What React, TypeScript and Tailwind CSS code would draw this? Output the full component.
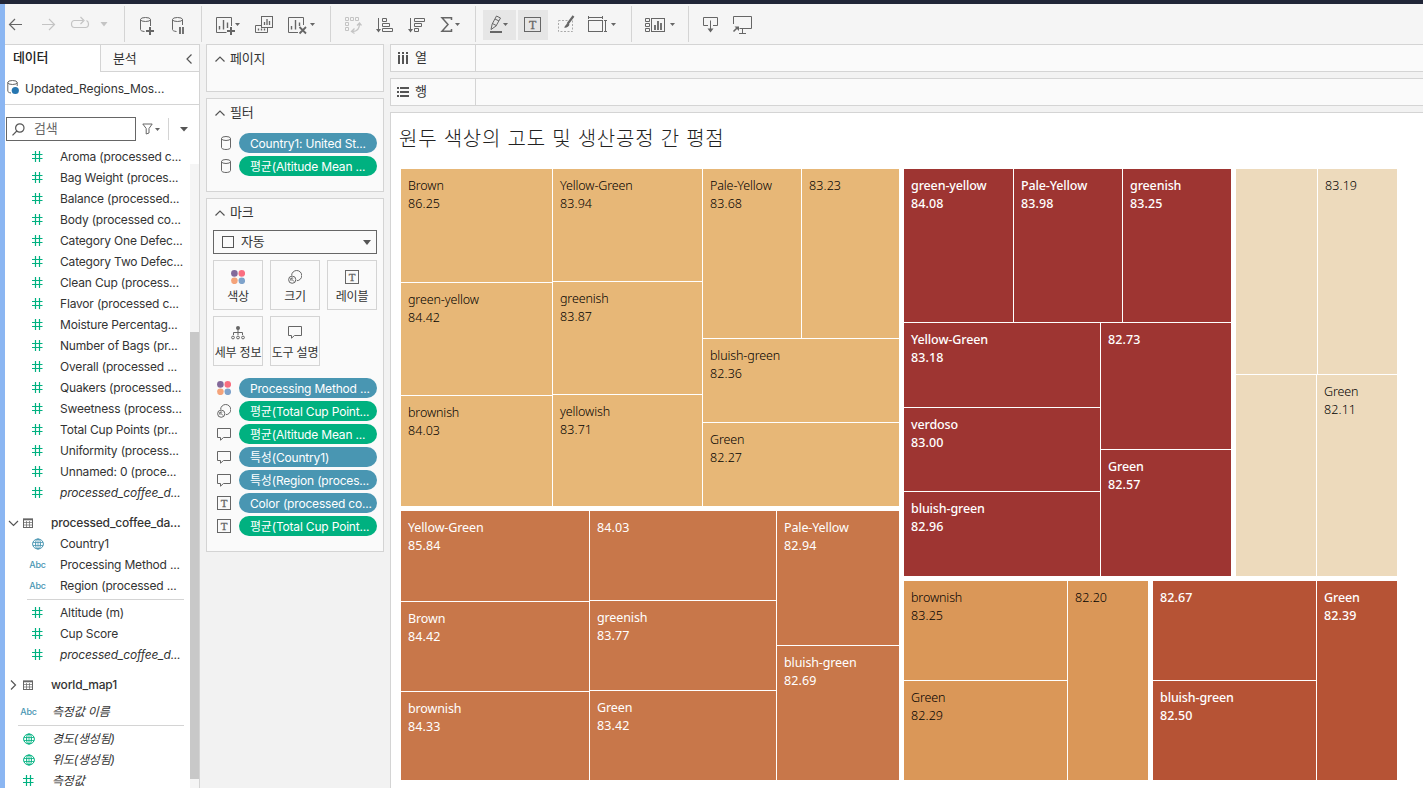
import type { ReactNode } from 'react';
import clsx from 'clsx';

const fields = [
  'Aroma (processed c...',
  'Bag Weight (proces...',
  'Balance (processed...',
  'Body (processed co...',
  'Category One Defec...',
  'Category Two Defec...',
  'Clean Cup (process...',
  'Flavor (processed c...',
  'Moisture Percentag...',
  'Number of Bags (pr...',
  'Overall (processed ...',
  'Quakers (processed...',
  'Sweetness (process...',
  'Total Cup Points (pr...',
  'Uniformity (process...',
  'Unnamed: 0 (proce...',
];

const markPills = [
  { icon: 'color', label: 'Processing Method ...', green: false },
  { icon: 'size', label: '평균(Total Cup Point...', green: true },
  { icon: 'tooltip', label: '평균(Altitude Mean ...', green: true },
  { icon: 'tooltip', label: '특성(Country1)', green: false },
  { icon: 'tooltip', label: '특성(Region (proces...', green: false },
  { icon: 'label', label: 'Color (processed co...', green: false },
  { icon: 'label', label: '평균(Total Cup Point...', green: true },
];

/* ---------- icons ---------- */

const ToolIcon = ({ className, children }: { className: string; children: ReactNode }) => (
  <svg className={clsx('h-[22px] shrink-0 text-[#666]', className)} fill="none" stroke="currentColor">
    {children}
  </svg>
);

const Sep = ({ className }: { className: string }) => (
  <div className={clsx('w-px h-9 shrink-0 bg-[#d4d4d4]', className)} />
);

const Caret = ({ x }: { x: number }) => (
  <path d={`M${x} 10h5l-2.5 3z`} fill="currentColor" stroke="none" />
);

const Hash = () => (
  <svg className="w-[11px] h-[11px]" stroke="#00b180" strokeWidth="1.2" fill="none">
    <path d="M0 3.5H10.5M0 7.5H10.5M3.5 0V11M7.5 0V11" />
  </svg>
);

const Globe = ({ color }: { color: string }) => (
  <svg className="w-[12px] h-[12px]" stroke={color} fill="none">
    <ellipse cx="6" cy="6" rx="5.4" ry="5" />
    <ellipse cx="6" cy="6" rx="2.4" ry="5" />
    <path d="M1 4.5H11M1 7.5H11M6 1V11" strokeWidth=".8" />
  </svg>
);

const Abc = () => <span className="font-[Inter] text-[9px] font-medium text-[#4996b2]">Abc</span>;

const TableIcon = () => (
  <svg className="w-[10px] h-[10px]" stroke="#666" fill="none">
    <rect x=".5" y="1" width="9" height="8.5" />
    <path d="M0 1.5H10" strokeWidth="1.6" />
    <path d="M1 4.5H9M1 7H9M3.5 3V9M6.5 3V9" strokeWidth=".7" />
  </svg>
);

const ChevronUp = () => (
  <svg className="w-[10px] h-[6px]" stroke="#555" strokeWidth="1.2" fill="none">
    <path d="M.5 5.5L5 1l4.5 4.5" />
  </svg>
);

const Cylinder = () => (
  <svg className="w-[10px] h-[14px] ml-1" stroke="#666" fill="none">
    <ellipse cx="5" cy="2.5" rx="4.5" ry="2" />
    <path d="M.5 2.5V11.5C.5 12.7 2.5 13.5 5 13.5s4.5-.8 4.5-2V2.5" />
  </svg>
);

const ColorDots = () => (
  <svg className="w-[14px] h-[14px]">
    <circle cx="3.4" cy="3.4" r="3.3" fill="#83699a" />
    <circle cx="10.8" cy="3.4" r="3.3" fill="#fa6e80" />
    <circle cx="3.4" cy="10.8" r="3.3" fill="#f4a37a" />
    <circle cx="10.8" cy="10.8" r="3.3" fill="#7fa3cb" />
  </svg>
);

const SizeIcon = () => (
  <svg className="w-[14px] h-[14px]" stroke="#666" fill="none">
    <path d="M3.6 5.5A5.1 5.1 0 1 1 8.8 10.7" />
    <circle cx="4.2" cy="9.7" r="3.6" />
    <path d="M2.5 8L6 11.5M3.2 10.8a1.6 1.6 0 0 1 2-2.5" />
  </svg>
);

const TooltipIcon = () => (
  <svg className="w-[14px] h-[13px]" stroke="#666" fill="none">
    <path d="M.5.5h13v9H6.5L3.5 12.2V9.5h-3z" />
  </svg>
);

const LabelIcon = () => (
  <svg className="w-[14px] h-[14px]" stroke="#666" fill="none">
    <rect x=".5" y=".5" width="13" height="13" />
    <text x="7" y="10.8" textAnchor="middle" fontSize="11" fontFamily="Liberation Serif, serif" fill="#666" strokeWidth=".3">
      T
    </text>
  </svg>
);

const DetailIcon = () => (
  <svg className="w-[14px] h-[14px]" stroke="#666" fill="none">
    <circle cx="7" cy="2" r="2" fill="#666" stroke="none" />
    <path d="M7 3V9M2.5 9V6.5H11.5V9" />
    <circle cx="2" cy="11.5" r="1.4" />
    <circle cx="7" cy="11.5" r="1.4" />
    <circle cx="12" cy="11.5" r="1.4" />
  </svg>
);

const MarkIcon = ({ name }: { name: string }) => {
  if (name === 'color') return <ColorDots />;
  if (name === 'size') return <SizeIcon />;
  if (name === 'tooltip') return <TooltipIcon />;
  if (name === 'detail') return <DetailIcon />;
  return <LabelIcon />;
};

/* ---------- toolbar ---------- */

const Toolbar = () => (
  <div className="flex items-center h-10 shrink-0 bg-[#f5f5f5]">
    <ToolIcon className="w-4 ml-[3px]">
      <path d="M1.5 11.5H14M7 6L1.5 11.5L7 17" strokeWidth="1.2" />
    </ToolIcon>
    <ToolIcon className="w-4 ml-[17px] text-[#c4c4c4]!">
      <path d="M1 11.5H13.5M8 6L13.5 11.5L8 17" strokeWidth="1.2" />
    </ToolIcon>
    <ToolIcon className="w-5 ml-[13px] text-[#c4c4c4]!">
      <path d="M13 7.5H4.5c-2 0-3 1.5-3 3.5s1 3.5 3 3.5h11c2 0 3-1.5 3-3.5s-1-3-2-3.5M10.5 4L14 7.5L10.5 11" strokeWidth="1.2" />
    </ToolIcon>
    <ToolIcon className="w-2 ml-[10px] text-[#c4c4c4]!">
      <path d="M.5 9h7L4 13.5z" fill="currentColor" stroke="none" />
    </ToolIcon>
    <Sep className="ml-[16px]" />

    <ToolIcon className="w-[18px] ml-[13px]">
      <ellipse cx="7.5" cy="6.5" rx="5" ry="2" />
      <path d="M2.5 6.5V16.5c0 1 1.5 1.8 4 2M12.5 6.5V13" />
      <path d="M12 14v8M8 18h8" strokeWidth="2" />
    </ToolIcon>
    <ToolIcon className="w-4 ml-[14px]">
      <ellipse cx="7.5" cy="6.5" rx="5" ry="2" />
      <path d="M2.5 6.5V16.5c0 1 1.5 1.8 4 2M12.5 6.5V12" />
      <path d="M10 14v7M13 14v7" strokeWidth="1.8" />
    </ToolIcon>
    <Sep className="ml-[15px]" />

    <ToolIcon className="w-[26px] ml-[13px]">
      <path d="M11.5 19.5H1.5v-15h15V13" />
      <path d="M4.5 13v3.5M8.5 7v9.500M12.5 9.5V15" strokeWidth="1.4" />
      <path d="M16 14v8M12 18h8" strokeWidth="2" />
      <Caret x={20} />
    </ToolIcon>
    <ToolIcon className="w-5 ml-[13px]">
      <rect x="7.5" y="3.5" width="11" height="11" />
      <path d="M7.5 12.5H1.5v7h12v-5" />
      <path d="M10.5 9v3M13 6v6M15.5 8v4M4.5 15.5v2M7.5 15.5v2M10.5 15.5v2" strokeWidth="1.3" />
    </ToolIcon>
    <ToolIcon className="w-7 ml-[13px]">
      <path d="M11 19.5H1.5v-15h15V12" />
      <path d="M4.5 13v3.5M8.5 7v9.5M12.5 9.5V13" strokeWidth="1.4" />
      <path d="M12.5 14l6.5 6.5M19 14l-6.5 6.5" strokeWidth="1.8" />
      <Caret x={23} />
    </ToolIcon>
    <Sep className="ml-[15px]" />

    <ToolIcon className="w-[18px] ml-[13px] text-[#c4c4c4]!">
      <path d="M1.5 4.5h3v3h-3zM6.5 4.5h3v3h-3zM11.5 4.5h3v3h-3zM1.5 9.5h3v3h-3zM1.5 14.5h3v3h-3z" />
      <path d="M8.5 18.5c4.5 0 7-3 7-8M10.5 15.5l-3 3 3 2M13 12.5l2.5-2.5 2 2.5" strokeWidth="1.3" />
    </ToolIcon>
    <ToolIcon className="w-5 ml-[13px]">
      <path d="M3.5 5v13" />
      <path d="M1 16h5l-2.5 3.5z" fill="currentColor" stroke="none" />
      <path d="M7.5 5.5h4v3h-4zM7.5 10.5h7v3h-7zM7.5 15.5h10v3h-10z" />
    </ToolIcon>
    <ToolIcon className="w-5 ml-[12px]">
      <path d="M3.5 5v13" />
      <path d="M1 16h5l-2.5 3.5z" fill="currentColor" stroke="none" />
      <path d="M7.5 5.5h10v3h-10zM7.5 10.5h7v3h-7zM7.5 15.5h4v3h-4z" />
    </ToolIcon>
    <ToolIcon className="w-[22px] ml-[13px]">
      <path d="M11.5 7V4.8H2l6 6.7-6 6.7h9.5V16" strokeWidth="1.5" />
      <Caret x={15} />
    </ToolIcon>
    <Sep className="ml-[13px]" />

    <div className="flex items-center w-[33px] h-[30px] ml-[7px] mt-[2px] pb-[2px] bg-[#e6e6e6]">
      <ToolIcon className="w-[33px]">
        <path d="M8 16.5l1.2-5.5 4.3-8 4 2-4.5 8zM9.5 10.5l4 2.2M12 6l4 2" />
        <path d="M7 19h12" strokeWidth="2" />
        <Caret x={20} />
      </ToolIcon>
    </div>
    <div className="flex items-center w-[30px] h-[30px] ml-[2px] mt-[2px] pb-[2px] bg-[#e6e6e6]">
      <ToolIcon className="w-[30px]">
        <rect x="6.5" y="4.5" width="16" height="14" />
        <text x="14.5" y="15.5" textAnchor="middle" fontSize="12" fontFamily="Liberation Serif, serif" fill="currentColor" strokeWidth=".3">
          T
        </text>
      </ToolIcon>
    </div>
    <ToolIcon className="w-[18px] ml-[9px]">
      <path d="M1.5 7.5h14v11h-14z" stroke="#aaa" strokeDasharray="2 1.5" />
      <path d="M16.5 3L10.5 11" strokeWidth="2.2" />
      <path d="M11 10.5c-2 0-2.5 2.5-4 4 2 .5 5-.5 5.500-3z" fill="currentColor" stroke="none" />
    </ToolIcon>
    <ToolIcon className="w-[30px] ml-[12px]">
      <path d="M1.5 4.5h14M1.5 3v3M15.5 3v3M18.5 7.5v11M17 7.5h3M17 18.5h3" />
      <rect x="1.5" y="7.5" width="14" height="11" />
      <Caret x={24} />
    </ToolIcon>
    <Sep className="ml-[14px]" />

    <ToolIcon className="w-[34px] ml-[12px]">
      <path d="M1.5 5.5h4v3h-4zM1.5 10.5h4v3h-4zM1.5 15.5h4v3h-4z" />
      <rect x="7.5" y="5.5" width="13" height="13" />
      <path d="M11 12v5M14 8v9M17 10v7" strokeWidth="1.8" />
      <Caret x={26} />
    </ToolIcon>
    <Sep className="ml-[10px]" />

    <ToolIcon className="w-[18px] ml-[13px]">
      <path d="M6 12.5H1.5v-8h14v8H11M8.5 7.5V17" />
      <path d="M5.5 15.5h6l-3 4z" fill="currentColor" stroke="none" />
    </ToolIcon>
    <ToolIcon className="w-[22px] ml-[12px]">
      <path d="M1.5 11V3.5h18v12H7.5M10.5 15.5v5M7 20.5h7" />
      <path d="M1.5 18.5L5.5 14.5" strokeWidth="1.6" />
      <path d="M2.5 13.5H7V18z" fill="currentColor" stroke="none" />
    </ToolIcon>
  </div>
);

/* ---------- data pane ---------- */

const Field = ({ icon, label, outer, italic }: { icon: ReactNode; label: string; outer?: boolean; italic?: boolean }) => (
  <div className={clsx('flex items-center h-[21px] shrink-0', outer ? 'pl-[14px]' : 'pl-[23px]')}>
    <span className="flex items-center justify-center w-[19px]">{icon}</span>
    <span className={clsx('whitespace-nowrap', outer ? 'ml-[14px]' : 'ml-[13px]', italic && 'italic')}>{label}</span>
  </div>
);

const TableRow = ({ label, open }: { label: string; open?: boolean }) => (
  <div className="flex items-center h-[21px] mt-[9px] pl-[3px] font-medium shrink-0">
    <svg className="w-[11px] h-[10px]" stroke="#555" fill="none" strokeWidth="1.2">
      {open ? <path d="M1 3l4.5 4.5L10 3" /> : <path d="M3 .5L7.5 5 3 9.5" />}
    </svg>
    <span className="ml-[4px] mr-[18px]">
      <TableIcon />
    </span>
    <span className="whitespace-nowrap">{label}</span>
  </div>
);

const DataPane = () => (
  <aside className="flex flex-col w-[195px] shrink-0 bg-white border-r border-[#d4d4d4] overflow-hidden">
    <div className="flex h-7 shrink-0 border-t border-[#d4d4d4] text-[13px] leading-[25px]">
      <div className="w-[95px] pl-2 font-medium text-[#222]">데이터</div>
      <div className="flex justify-between items-center flex-1 pl-3 pr-[7px] bg-[#fafafa] border-l border-b border-[#d4d4d4]">
        분석
        <svg className="w-[6px] h-[10px] mt-[2px]" stroke="#555" fill="none" strokeWidth="1.2">
          <path d="M5.5 .5L1 5l4.5 4.5" />
        </svg>
      </div>
    </div>
    <div className="flex items-center h-[33px] pl-[2px] shrink-0 border-b border-[#d4d4d4]">
      <svg className="w-[13px] h-[15px] mb-[2px]" stroke="#666" fill="none">
        <ellipse cx="5.5" cy="2.5" rx="4.7" ry="2" />
        <path d="M.8 2.5V11c0 1 1.2 1.7 3.2 2M10.2 2.5V6" />
        <circle cx="8.3" cy="10.5" r="3.6" fill="#2676b0" stroke="none" />
      </svg>
      <span className="ml-[5px] pt-[2px] tracking-[-0.05px]">Updated_Regions_Mos...</span>
    </div>
    <div className="flex items-center h-6 mt-3 pl-px shrink-0">
      <div className="flex items-center w-[130px] h-6 pl-[5px] border border-[#666] text-[13px] text-[#666]">
        <svg className="w-[13px] h-[13px] mr-[9px]" stroke="#555" fill="none" strokeWidth="1.2">
          <circle cx="7.8" cy="5" r="4.2" />
          <path d="M4.8 8L.5 12.3" />
        </svg>
        검색
      </div>
      <svg className="w-[19px] h-3 ml-[6px]" stroke="#666" fill="none">
        <path d="M.8 1h9.4L7 5.5V10L4.2 11V5.5z" />
        <path d="M13 5h5l-2.5 3z" fill="#666" stroke="none" />
      </svg>
      <div className="w-px h-[22px] ml-[7px] bg-[#d4d4d4]" />
      <svg className="w-2 h-5 ml-[11px]">
        <path d="M0 8h8l-4 4.5z" fill="#555" />
      </svg>
    </div>

    <div className="flex flex-1 min-h-0">
      <div className="flex flex-col w-[185px] pt-[5px] overflow-hidden">
        {fields.map((label) => (
          <Field key={label} icon={<Hash />} label={label} />
        ))}
        <Field icon={<Hash />} label="processed_coffee_d..." italic />
        <TableRow label="processed_coffee_da..." open />
        <Field icon={<Globe color="#4996b2" />} label="Country1" />
        <Field icon={<Abc />} label="Processing Method ..." />
        <Field icon={<Abc />} label="Region (processed ..." />
        <div className="h-px mt-[3px] mb-[2px] ml-[22px] mr-[6px] shrink-0 bg-[#d4d4d4]" />
        <Field icon={<Hash />} label="Altitude (m)" />
        <Field icon={<Hash />} label="Cup Score" />
        <Field icon={<Hash />} label="processed_coffee_d..." italic />
        <TableRow label="world_map1" />
        <div className="h-[6px] shrink-0" />
        <Field icon={<Abc />} label="측정값 이름" outer italic />
        <div className="h-px mt-[3px] mb-[2px] ml-[13px] mr-[6px] shrink-0 bg-[#d4d4d4]" />
        <Field icon={<Globe color="#00b180" />} label="경도(생성됨)" outer italic />
        <Field icon={<Globe color="#00b180" />} label="위도(생성됨)" outer italic />
        <Field icon={<Hash />} label="측정값" outer italic />
      </div>
      <div className="w-[9px] mt-[23px] bg-[#f5f5f5]">
        <div className="h-[447px] mt-[168px] bg-[#c8c8c8]" />
      </div>
    </div>
  </aside>
);

/* ---------- cards ---------- */

const Card = ({ title, className, children }: { title: string; className: string; children?: ReactNode }) => (
  <section className={clsx('w-[178px] shrink-0 bg-[#fafafa] border border-[#d4d4d4]', className)}>
    <div className="flex items-center h-7 pl-[8px] text-[13px]">
      <ChevronUp />
      <span className="ml-[5px]">{title}</span>
    </div>
    {children}
  </section>
);

const Pill = ({ icon, label, green }: { icon: ReactNode; label: string; green?: boolean }) => (
  <div className="flex items-center h-5 mb-[3px]">
    <span className="flex justify-center w-[34px]">{icon}</span>
    <span
      className={clsx(
        'w-[138px] h-5 ml-[-2px] pl-[11px] rounded-full text-white leading-[22px] whitespace-nowrap',
        green ? 'bg-[#00b180]' : 'bg-[#4996b2]'
      )}
    >
      {label}
    </span>
  </div>
);

const MarkButton = ({ icon, label }: { icon: string; label: string }) => (
  <div className="flex flex-col items-center w-[50px] h-[50px] pt-[9px] border border-[#d4d4d4] text-[12px] leading-[17px]">
    <div className="h-[18px]">
      <MarkIcon name={icon} />
    </div>
    <span className="whitespace-nowrap">{label}</span>
  </div>
);

const Cards = () => (
  <div className="flex flex-col gap-[6px] w-[190px] pl-[6px] shrink-0">
    <Card title="페이지" className="h-12" />
    <Card title="필터" className="h-[94px]">
      <div className="mt-[6px]">
        <Pill icon={<Cylinder />} label="Country1: United St..." />
        <Pill icon={<Cylinder />} label="평균(Altitude Mean ..." green />
      </div>
    </Card>
    <Card title="마크" className="h-[354px]">
      <div className="flex items-center w-[164px] h-6 mt-[3px] ml-[6px] pl-2 pr-[5px] border border-[#666] text-[13px]">
        <span className="w-3 h-3 mr-[7px] border border-[#555]" />
        자동
        <svg className="w-2 h-[5px] ml-auto">
          <path d="M0 0h8L4 5z" fill="#555" />
        </svg>
      </div>
      <div className="grid grid-cols-[50px_50px_50px] gap-x-[7px] gap-y-[6px] mt-[6px] ml-[6px]">
        <MarkButton icon="color" label="색상" />
        <MarkButton icon="size" label="크기" />
        <MarkButton icon="label" label="레이블" />
        <MarkButton icon="detail" label="세부 정보" />
        <MarkButton icon="tooltip" label="도구 설명" />
      </div>
      <div className="mt-3">
        {markPills.map((p, i) => (
          <Pill key={i} icon={<MarkIcon name={p.icon} />} label={p.label} green={p.green} />
        ))}
      </div>
    </Card>
  </div>
);

/* ---------- worksheet ---------- */

const Shelf = ({ icon, title }: { icon: ReactNode; title: string }) => (
  <div className="flex h-7 mb-[6px] shrink-0 bg-[#fafafa] border border-r-0 border-[#d4d4d4]">
    <div className="flex items-center w-[85px] pl-[6px] pb-px border-r border-[#d4d4d4] text-[13px] leading-none">
      {icon}
      <span className="ml-[6px]">{title}</span>
    </div>
  </div>
);

const Cell = ({ name, value, className }: { name?: string; value?: string; className: string }) => (
  <div className={clsx('shrink-0 pl-[7px] pt-2 leading-[18px] whitespace-nowrap overflow-hidden', className)}>
    {name && <div className="tracking-[-0.12px]">{name}</div>}
    {value && <div>{value}</div>}
  </div>
);

const Treemap = () => (
  <div className="flex gap-[5px] ml-[10px] font-['Noto_Sans','Open_Sans',sans-serif] text-[12.5px] tracking-[0.1px]">
    <div className="flex flex-col gap-[5px] w-[498px]">
      <div className="flex gap-px h-[337px] font-light text-black">
        <div className="flex flex-col gap-px w-[151px]">
          <Cell name="Brown" value="86.25" className="h-[113px] bg-[#e7b777]" />
          <Cell name="green-yellow" value="84.42" className="h-[112px] bg-[#e7b777]" />
          <Cell name="brownish" value="84.03" className="h-[110px] bg-[#e7b777]" />
        </div>
        <div className="flex flex-col gap-px w-[149px]">
          <Cell name="Yellow-Green" value="83.94" className="h-[112px] bg-[#e7b777]" />
          <Cell name="greenish" value="83.87" className="h-[112px] bg-[#e7b777]" />
          <Cell name="yellowish" value="83.71" className="h-[111px] bg-[#e7b777]" />
        </div>
        <div className="flex flex-col gap-px w-[196px]">
          <div className="flex gap-px h-[169px]">
            <Cell name="Pale-Yellow" value="83.68" className="w-[98px] bg-[#e7b777]" />
            <Cell value="83.23" className="w-[97px] bg-[#e7b777]" />
          </div>
          <Cell name="bluish-green" value="82.36" className="h-[83px] bg-[#e7b777]" />
          <Cell name="Green" value="82.27" className="h-[83px] bg-[#e7b777]" />
        </div>
      </div>

      <div className="flex gap-px h-[269px] text-white">
        <div className="flex flex-col gap-px w-[188px]">
          <Cell name="Yellow-Green" value="85.84" className="h-[90px] bg-[#c8774a]" />
          <Cell name="Brown" value="84.42" className="h-[89px] bg-[#c8774a]" />
          <Cell name="brownish" value="84.33" className="h-[88px] bg-[#c8774a]" />
        </div>
        <div className="flex flex-col gap-px w-[186px]">
          <Cell value="84.03" className="h-[89px] bg-[#c8774a]" />
          <Cell name="greenish" value="83.77" className="h-[89px] bg-[#c8774a]" />
          <Cell name="Green" value="83.42" className="h-[89px] bg-[#c8774a]" />
        </div>
        <div className="flex flex-col gap-px w-[122px]">
          <Cell name="Pale-Yellow" value="82.94" className="h-[134px] bg-[#c8774a]" />
          <Cell name="bluish-green" value="82.69" className="h-[134px] bg-[#c8774a]" />
        </div>
      </div>
    </div>

    <div className="flex flex-col gap-[5px] w-[493px]">
      <div className="flex gap-[5px] h-[407px]">
        <div className="flex flex-col gap-px w-[327px] font-medium text-white">
          <div className="flex gap-px h-[153px]">
            <Cell name="green-yellow" value="84.08" className="w-[109px] bg-[#9e3532]" />
            <Cell name="Pale-Yellow" value="83.98" className="w-[108px] bg-[#9e3532]" />
            <Cell name="greenish" value="83.25" className="w-[108px] bg-[#9e3532]" />
          </div>
          <div className="flex gap-px h-[253px]">
            <div className="flex flex-col gap-px w-[196px]">
              <Cell name="Yellow-Green" value="83.18" className="h-[84px] bg-[#9e3532]" />
              <Cell name="verdoso" value="83.00" className="h-[83px] bg-[#9e3532]" />
              <Cell name="bluish-green" value="82.96" className="h-[84px] bg-[#9e3532]" />
            </div>
            <div className="flex flex-col gap-px w-[130px]">
              <Cell value="82.73" className="h-[126px] bg-[#9e3532]" />
              <Cell name="Green" value="82.57" className="h-[126px] bg-[#9e3532]" />
            </div>
          </div>
        </div>
        <div className="flex flex-col gap-px w-[161px] font-light text-black">
          <div className="flex gap-px h-[205px]">
            <Cell className="w-[81px] bg-[#eddabc]" />
            <Cell value="83.19" className="w-[79px] bg-[#eddabc]" />
          </div>
          <div className="flex gap-px h-[201px]">
            <Cell className="w-[80px] bg-[#eddabc]" />
            <Cell name="Green" value="82.11" className="w-[80px] bg-[#eddabc]" />
          </div>
        </div>
      </div>

      <div className="flex gap-[5px] h-[199px]">
        <div className="flex gap-px w-[244px] font-light text-black">
          <div className="flex flex-col gap-px w-[163px]">
            <Cell name="brownish" value="83.25" className="h-[99px] bg-[#da9758]" />
            <Cell name="Green" value="82.29" className="h-[99px] bg-[#da9758]" />
          </div>
          <Cell value="82.20" className="w-[80px] bg-[#da9758]" />
        </div>
        <div className="flex gap-px w-[244px] font-medium text-white">
          <div className="flex flex-col gap-px w-[163px]">
            <Cell value="82.67" className="h-[99px] bg-[#b65335]" />
            <Cell name="bluish-green" value="82.50" className="h-[99px] bg-[#b65335]" />
          </div>
          <Cell name="Green" value="82.39" className="w-[80px] bg-[#b65335]" />
        </div>
      </div>
    </div>
  </div>
);

const Worksheet = () => (
  <main className="flex flex-col flex-1 min-w-0">
    <Shelf
      title="열"
      icon={
        <svg className="w-3 h-3" fill="#555">
          <path d="M1 0h2v2H1zM5 0h2v2H5zM9 0h2v2H9zM1 3h2v9H1zM5 3h2v9H5zM9 3h2v9H9z" />
        </svg>
      }
    />
    <Shelf
      title="행"
      icon={
        <svg className="w-3 h-[10px]" fill="#555">
          <path d="M0 0h2v2H0zM3 0h9v2H3zM0 4h2v2H0zM3 4h9v2H3zM0 8h2v2H0zM3 8h9v2H3z" />
        </svg>
      }
    />
    <div className="flex-1 bg-white border-t border-l border-[#d4d4d4] overflow-hidden">
      <h1 className="h-14 pl-[8px] pt-[10px] text-[20px] font-light leading-8 tracking-[0.75px] text-[#222]">
        원두 색상의 고도 및 생산공정 간 평점
      </h1>
      <Treemap />
    </div>
  </main>
);

const App = () => (
  <div className="flex flex-col w-[1423px] h-[788px] overflow-hidden bg-[#f2f2f2] font-['Inter','Noto_Sans_CJK_KR',sans-serif] text-[12px] tracking-[-0.18px] text-[#333]">
    <div className="h-1 shrink-0 bg-[#212638]" />
    <div className="flex flex-1 min-h-0">
      <div className="w-[5px] shrink-0 bg-[#8bb6f2]" />
      <div className="flex flex-col flex-1 min-w-0">
        <Toolbar />
        <div className="flex flex-1 min-h-0">
          <DataPane />
          <Cards />
          <Worksheet />
        </div>
      </div>
    </div>
  </div>
);

export default App;
